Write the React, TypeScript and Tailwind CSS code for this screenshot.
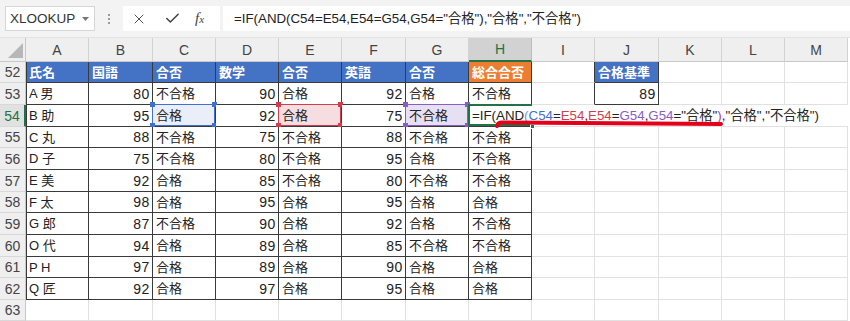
import { X, Check } from 'lucide-react';

const FONT = { fontFamily: '"Liberation Sans", "Noto Sans CJK JP", sans-serif' };

const table: string[][] = [
  ['氏名', '国語', '合否', '数学', '合否', '英語', '合否', '総合合否'],
  ['A 男', '80', '不合格', '90', '合格', '92', '合格', '不合格'],
  ['B 助', '95', '合格', '92', '合格', '75', '不合格', ''],
  ['C 丸', '88', '不合格', '75', '不合格', '88', '不合格', '不合格'],
  ['D 子', '75', '不合格', '80', '不合格', '95', '合格', '不合格'],
  ['E 美', '92', '合格', '85', '不合格', '80', '不合格', '不合格'],
  ['F 太', '98', '合格', '95', '合格', '95', '合格', '合格'],
  ['G 郎', '87', '不合格', '90', '合格', '92', '合格', '不合格'],
  ['O 代', '94', '合格', '89', '合格', '85', '不合格', '不合格'],
  ['P H', '97', '合格', '89', '合格', '90', '合格', '合格'],
  ['Q 匠', '92', '合格', '97', '合格', '95', '合格', '合格'],
];

const letters = ['A', 'B', 'C', 'D', 'E', 'F', 'G', 'H', 'I', 'J', 'K', 'L', 'M'];
const rowHeights = ['h-[21px]', 'h-[22px]', 'h-[22px]', 'h-[21px]', 'h-[22px]', 'h-[22px]', 'h-[21px]', 'h-[22px]', 'h-[22px]', 'h-[21px]', 'h-[22px]', 'h-[21px]'];
const GRID = 'grid grid-cols-[26px_63px_64px_63px_63px_63px_64px_63px_63px_63px_64px_63px_63px_63px]';

// reference boxes drawn by Excel while editing the formula
const refs: Record<number, { box: string; dot: string }> = {
  2: { box: 'border-[#3f6fd1] bg-[#e9eef8]', dot: 'bg-[#3f6fd1]' },
  4: { box: 'border-[#d23c4c] bg-[#f5dde0]', dot: 'bg-[#d23c4c]' },
  6: { box: 'border-[#8a5cc6] bg-[#e7e0f3]', dot: 'bg-[#8a5cc6]' },
};

function Dots({ cls }: { cls: string }) {
  return (
    <>
      <span className={`absolute -left-[3px] -top-[3px] w-[5px] h-[5px] ${cls}`} />
      <span className={`absolute -right-[3px] -top-[3px] w-[5px] h-[5px] ${cls}`} />
      <span className={`absolute -left-[3px] -bottom-[3px] w-[5px] h-[5px] ${cls}`} />
      <span className={`absolute -right-[3px] -bottom-[3px] w-[5px] h-[5px] ${cls}`} />
    </>
  );
}

function Formula() {
  return (
    <span className="whitespace-nowrap text-[13.3px] text-[#222]">
      =IF(AND<span className="text-[#6b9be0]">(</span>
      <span className="text-[#3f6fd1]">C54</span>=<span className="text-[#d23c4c]">E54</span>,
      <span className="text-[#d23c4c]">E54</span>=<span className="text-[#8a5cc6]">G54</span>,
      <span className="text-[#8a5cc6]">G54</span>="合格"<span className="text-[#b03ab8]">)</span>,"合格","不合格")
    </span>
  );
}

function Cell({ r, c }: { r: number; c: number }) {
  const inTable = r <= 10 && c <= 7;
  const inJ = (r === 0 || r === 1) && c === 9;
  const text = inTable ? table[r][c] : inJ ? (r === 0 ? '合格基準' : '89') : '';
  const numeric = /^\d+$/.test(text);
  const overflowRow = r === 2 && c >= 7;
  const editing = r === 2 && c === 7;

  let border = 'border-r border-b border-[#e1e1e1]';
  if (inTable || inJ) border = 'border-r border-b border-[#3a3a3a]';
  if ((r === 0 || r === 1) && c === 8) border = 'border-r border-b border-r-[#3a3a3a] border-b-[#e1e1e1]';
  if (overflowRow) border = inTable ? 'border-b border-[#3a3a3a]' : 'border-b border-[#e1e1e1]';

  let bg = 'bg-white';
  let color = 'text-[#222]';
  let weight = '';
  if (r === 0 && (inTable || inJ)) {
    bg = c === 7 ? 'bg-[#ed7d31]' : 'bg-[#4472c4]';
    color = 'text-white';
    weight = 'font-bold';
  }
  if (overflowRow && c > 7) bg = 'bg-transparent';

  const leftEdge = c === 0 && r <= 10 ? 'shadow-[inset_1px_0_0_#3a3a3a]' : '';
  const ref = r === 2 ? refs[c] : undefined;

  return (
    <div className={`relative flex items-center ${border} ${bg} ${leftEdge} ${numeric ? 'justify-end pr-[2px]' : 'pl-[3px]'} ${editing ? 'z-10' : ''}`}>
      {ref && (
        <div className={`absolute -left-px -top-px right-0 bottom-0 border ${ref.box}`}>
          <Dots cls={ref.dot} />
        </div>
      )}
      {editing && (
        <>
          <div className="absolute -left-px -top-px w-[64px] bottom-0 border-l-2 border-t-2 border-b-2 border-[#217346]" />
          <span className="absolute -right-[3px] -bottom-[3px] w-[5px] h-[5px] bg-[#217346] border border-white" />
        </>
      )}
      <span
        className={`relative leading-none ${color} ${weight} whitespace-nowrap ${
          numeric ? 'text-[14px] tracking-[0.6px]' : 'text-[13px]'
        }`}
      >
        {editing ? <Formula /> : text}
      </span>
    </div>
  );
}

export default function App() {
  return (
    <div className="relative w-[850px] h-[321px] overflow-hidden bg-white select-none" style={FONT}>
      {/* Formula bar */}
      <div className="flex items-center h-[38px] bg-[#f3f3f3] border-b border-[#e2e2e2]">
        <div className="ml-[5px] w-[90px] h-[25px] bg-white border border-[#d6d6d6] flex items-center justify-between pl-[4px] pr-[5px]">
          <span className="text-[13.5px] text-[#333] leading-none">XLOOKUP</span>
          <svg width="7" height="4" viewBox="0 0 7 4"><path d="M0 0h7L3.5 4z" fill="#777" /></svg>
        </div>
        <div className="w-[28px] flex flex-col items-center gap-[2px]">
          <span className="w-[2px] h-[2px] bg-[#9a9a9a]" />
          <span className="w-[2px] h-[2px] bg-[#9a9a9a]" />
          <span className="w-[2px] h-[2px] bg-[#9a9a9a]" />
        </div>
        <div className="w-[97px] h-[25px] bg-white flex items-center text-[#444]">
          <X className="ml-[8px] w-[16px] h-[16px]" strokeWidth={1.4} />
          <Check className="ml-[17px] w-[17px] h-[17px]" strokeWidth={2.2} />
          <span className="ml-[14px] text-[15px] italic leading-none" style={{ fontFamily: '"Liberation Serif", serif' }}>
            f<span className="text-[11px]">x</span>
          </span>
        </div>
        <div className="ml-[3px] flex-1 h-[25px] bg-white flex items-center pl-[11px]">
          <span className="text-[13.3px] text-[#222] leading-none whitespace-nowrap">
            =IF(AND(C54=E54,E54=G54,G54="合格"),"合格","不合格")
          </span>
        </div>
      </div>

      {/* Column headers */}
      <div className={`${GRID} h-[24px]`}>
        <div className="bg-[#efefef] border-r border-b border-[#c8c8c8] relative">
          <svg className="absolute inset-0" width="26" height="23" viewBox="0 0 26 23">
            <polygon points="23,5 23,20 8,20" fill="#b7b7b7" />
          </svg>
        </div>
        {letters.map((l) => (
          <div
            key={l}
            className={`flex items-center justify-center text-[14px] leading-none ${
              l === 'H'
                ? 'bg-[#d2d2d2] text-[#217346] border-r border-[#bcbcbc] border-b-2 border-b-[#217346]'
                : 'bg-[#efefef] text-[#444] border-r border-b border-[#d2d2d2] border-b-[#c8c8c8]'
            }`}
          >
            {l}
          </div>
        ))}
      </div>

      {/* Rows */}
      {rowHeights.map((h, r) => (
        <div key={r} className={`${GRID} ${h}`}>
          <div
            className={`flex items-center justify-center text-[14px] leading-none border-b border-[#d8d8d8] ${
              r === 2
                ? 'bg-[#e1e1e1] text-[#217346] border-r-2 border-r-[#217346]'
                : 'bg-[#efefef] text-[#444] border-r border-r-[#c8c8c8]'
            }`}
          >
            {52 + r}
          </div>
          {letters.map((_, c) => (
            <Cell key={c} r={r} c={c} />
          ))}
        </div>
      ))}

      {/* red hand-drawn underline */}
      <svg className="absolute left-0 top-0 pointer-events-none z-20" width="850" height="321">
        <path d="M497 126 Q498 122 503 122.5 L721 124" stroke="#e3001b" strokeWidth="4" fill="none" strokeLinecap="round" />
      </svg>
    </div>
  );
}
